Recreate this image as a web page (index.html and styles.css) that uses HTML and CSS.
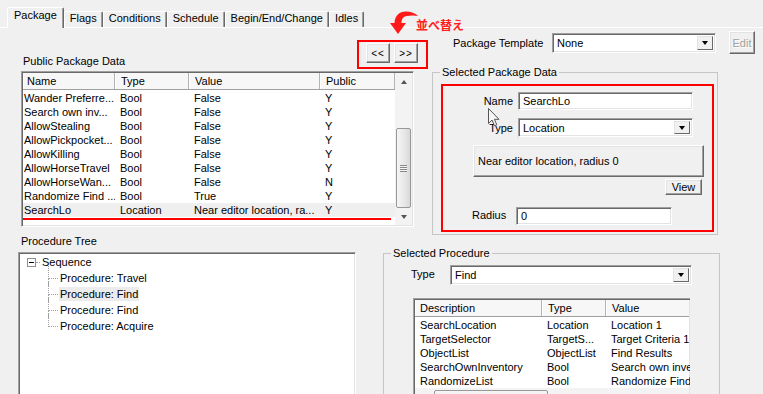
FILE: index.html
```html
<!DOCTYPE html>
<html lang="ja">
<head>
  <meta charset="UTF-8" />
  <title>Package</title>
  <link rel="stylesheet" href="styles.css">
</head>
<body>
  <div class="tabs">
    <div class="tab active">Package</div>
    <div class="tab">Flags</div>
    <div class="tab">Conditions</div>
    <div class="tab">Schedule</div>
    <div class="tab">Begin/End/Change</div>
    <div class="tab">Idles</div>
  </div>

  <div class="upper">
    <div class="pkg-col">
      <div class="pkg-head">
        <span class="caption">Public Package Data</span>
        <div class="red-box move-box">
          <button class="btn move-btn">&lt;&lt;</button>
          <button class="btn move-btn">&gt;&gt;</button>
        </div>
      </div>

      <div class="listview pkg-list">
        <div class="list-body">
          <div class="lv-head">
            <span>Name</span><span>Type</span><span>Value</span><span>Public</span>
          </div>
          <div class="lv-row"><span>Wander Preferre...</span><span>Bool</span><span>False</span><span>Y</span></div>
          <div class="lv-row"><span>Search own inv...</span><span>Bool</span><span>False</span><span>Y</span></div>
          <div class="lv-row"><span>AllowStealing</span><span>Bool</span><span>False</span><span>Y</span></div>
          <div class="lv-row"><span>AllowPickpocket...</span><span>Bool</span><span>False</span><span>Y</span></div>
          <div class="lv-row"><span>AllowKilling</span><span>Bool</span><span>False</span><span>Y</span></div>
          <div class="lv-row"><span>AllowHorseTravel</span><span>Bool</span><span>False</span><span>Y</span></div>
          <div class="lv-row"><span>AllowHorseWan...</span><span>Bool</span><span>False</span><span>N</span></div>
          <div class="lv-row"><span>Randomize Find ...</span><span>Bool</span><span>True</span><span>Y</span></div>
          <div class="lv-row selected"><span>SearchLo</span><span>Location</span><span>Near editor location, ra...</span><span>Y</span></div>
          <div class="red-line"></div>
        </div>
        <div class="vscroll">
          <span class="arrow up"></span>
          <span class="thumb"><i></i></span>
          <span class="arrow down"></span>
        </div>
      </div>
    </div>

    <div class="data-col">
      <div class="template-row">
        <label class="template-label">Package Template</label>
        <div class="combo template-combo"><span>None</span><b class="drop"></b></div>
        <button class="btn edit-btn" disabled>Edit</button>
      </div>

      <fieldset class="group pkg-data">
        <legend>Selected Package Data</legend>
        <div class="red-box data-box">
          <div class="field-row name-row">
            <label>Name</label>
            <div class="edit-box name-box">SearchLo</div>
          </div>
          <div class="field-row type-row">
            <label>Type</label>
            <div class="combo type-combo"><span>Location</span><b class="drop"></b></div>
          </div>
          <button class="btn big-btn">Near editor location, radius 0</button>
          <button class="btn view-btn">View</button>
          <div class="field-row radius-row">
            <label>Radius</label>
            <div class="edit-box radius-box">0</div>
          </div>
        </div>
      </fieldset>
    </div>
  </div>

  <div class="lower">
    <div class="tree-col">
      <div class="tree-cap">Procedure Tree</div>
      <div class="tree">
        <div class="tree-root"><span class="expander"></span><span class="node-text">Sequence</span></div>
        <ul class="tree-children">
          <li><span class="node-text">Procedure: Travel</span></li>
          <li><span class="node-text hot">Procedure: Find</span></li>
          <li><span class="node-text">Procedure: Find</span></li>
          <li><span class="node-text">Procedure: Acquire</span></li>
        </ul>
      </div>
    </div>

    <fieldset class="group proc-group">
      <legend>Selected Procedure</legend>
      <div class="field-row proc-type">
        <label>Type</label>
        <div class="combo proc-combo"><span>Find</span><b class="drop"></b></div>
      </div>
      <div class="listview proc-list">
        <div class="lv-head">
          <span>Description</span><span>Type</span><span>Value</span>
        </div>
        <div class="lv-row"><span>SearchLocation</span><span>Location</span><span>Location 1</span></div>
        <div class="lv-row"><span>TargetSelector</span><span>TargetS...</span><span>Target Criteria 1</span></div>
        <div class="lv-row"><span>ObjectList</span><span>ObjectList</span><span>Find Results</span></div>
        <div class="lv-row"><span>SearchOwnInventory</span><span>Bool</span><span>Search own inve</span></div>
        <div class="lv-row"><span>RandomizeList</span><span>Bool</span><span>Randomize Find</span></div>
        <div class="hscroll">
          <span class="arrow left"></span>
          <span class="hthumb"></span>
        </div>
      </div>
    </fieldset>
  </div>

  <!-- annotations drawn over the dialog -->
  <svg class="sort-arrow" width="32" height="28" viewBox="0 0 32 28">
    <path d="M6.5 15.5 C6.5 8 11 3.5 18 3.5 C23 3.5 27 5 30 8 C26 7 22 7.5 19 8 C15 8.5 13.5 11 13.5 15.5 Z" fill="#ff1a1a"/>
    <path d="M2 15 L18 15 L10 26 Z" fill="#ff1a1a"/>
  </svg>
  <span class="sort-note">並べ替え</span>
  <svg class="cursor" width="13" height="20" viewBox="0 0 13 20">
    <path d="M0.5 0.5 L0.5 15.5 L4 12 L6.5 17.8 L8.8 16.8 L6.4 11.3 L11 11.3 Z" fill="#f6f6f6" stroke="#555" stroke-width="1"/>
  </svg>
</body>
</html>
```

FILE: styles.css
```css
* {
  box-sizing: border-box;
}

body {
  margin: 0;
  width: 763px;
  height: 394px;
  overflow: hidden;
  position: relative;
  background: #f0f0f0;
  font-family: "Liberation Sans", Arial, sans-serif;
  font-size: 11px;
  color: #000;
}

button {
  font: inherit;
  color: inherit;
}

/* tab strip */
.tabs {
  display: flex;
  align-items: flex-end;
  height: 28px;
  padding-left: 7px;
  border-bottom: 1px solid #fff;
}

.tab {
  height: 16px;
  line-height: 12px;
  padding: 0 5px;
  border: 1px solid #fff;
  border-bottom: none;
  border-right-color: #696969;
  box-shadow: inset -1px 0 #a0a0a0;
  border-radius: 2px 2px 0 0;
  white-space: nowrap;
}

.tab.active {
  position: relative;
  height: 21px;
  line-height: 14px;
  padding: 0 6px;
  margin-bottom: -1px;
  background: #f0f0f0;
}

/* common controls */
.btn {
  background: #f0f0f0;
  border: 1px solid;
  border-color: #fff #696969 #696969 #fff;
  box-shadow: inset -1px -1px #a0a0a0, inset 1px 1px #e3e3e3;
  padding: 0;
}

.edit-box,
.combo {
  background: #fff;
  border: 1px solid;
  border-color: #a0a0a0 #fff #fff #a0a0a0;
  box-shadow: inset 1px 1px #696969, inset -1px -1px #e3e3e3;
}

.edit-box {
  height: 18px;
  line-height: 16px;
  padding: 0 4px;
}

.combo {
  display: flex;
  align-items: center;
  height: 20px;
  padding: 2px;
}

.combo span {
  flex: 1;
  padding-left: 2px;
}

.drop {
  width: 16px;
  height: 100%;
  display: flex;
  align-items: center;
  justify-content: center;
  background: #f0f0f0;
  border: 1px solid;
  border-color: #e3e3e3 #696969 #696969 #e3e3e3;
}

.drop::after {
  content: "";
  border-left: 3.5px solid transparent;
  border-right: 3.5px solid transparent;
  border-top: 4px solid #000;
}

.red-box {
  border: 2px solid #ff0000;
}

.group {
  margin: 0;
  min-width: 0;
  border: 1px solid #c6c6c6;
}

.group legend {
  padding: 0 2px;
  line-height: 14px;
}

.field-row {
  display: flex;
  align-items: center;
}

/* upper half */
.upper {
  display: flex;
}

.pkg-col {
  width: 407px;
  margin-left: 21px;
}

.pkg-head {
  height: 43px;
  display: flex;
  justify-content: space-between;
  align-items: flex-end;
}

.caption {
  line-height: 14px;
  padding-left: 2px;
  margin-bottom: 3px;
}

.move-box {
  align-self: flex-start;
  margin-top: 12px;
  display: flex;
  gap: 4px;
  padding: 1px 8px 4px 7px;
}

.move-btn {
  width: 24px;
  height: 20px;
  font-size: 10px;
  letter-spacing: 1px;
}

/* list views */
.listview {
  background: #fff;
  border: 1px solid;
  border-color: #a0a0a0 #fff #fff #a0a0a0;
  box-shadow: inset 1px 1px #696969, inset -1px -1px #e3e3e3;
  padding: 1px;
}

.lv-head,
.lv-row {
  display: grid;
  white-space: nowrap;
}

.lv-head {
  height: 17px;
  margin-bottom: 1px;
  background: #f7f7f7;
  border-bottom: 1px solid #a0a0a0;
}

.lv-head span {
  line-height: 16px;
  padding-left: 6px;
  border-right: 1px solid #b4b4b4;
  box-shadow: inset 1px 0 #fff;
  overflow: hidden;
}

.lv-row span {
  line-height: 14px;
  padding-left: 5px;
  overflow: hidden;
}

.pkg-list {
  display: flex;
  width: 393px;
  height: 156px;
}

.pkg-list .list-body {
  width: 372px;
}

.pkg-list .lv-head,
.pkg-list .lv-row {
  grid-template-columns: 92px 74px 131px 75px;
}

.pkg-list .lv-head span:first-child {
  padding-left: 4px;
}

.pkg-list .lv-row span:first-child {
  padding-left: 1px;
}

.lv-row.selected {
  background: #efefef;
}

.red-line {
  width: 368px;
  height: 2px;
  margin-top: 1px;
  background: #ff0000;
}

.vscroll {
  width: 17px;
  display: flex;
  flex-direction: column;
  background: #f3f3f3;
}

.arrow {
  width: 17px;
  height: 17px;
  flex: none;
  display: flex;
  align-items: center;
  justify-content: center;
}

.arrow.up::after {
  content: "";
  border-left: 3.5px solid transparent;
  border-right: 3.5px solid transparent;
  border-bottom: 4px solid #555;
}

.arrow.down::after {
  content: "";
  border-left: 3.5px solid transparent;
  border-right: 3.5px solid transparent;
  border-top: 4px solid #555;
}

.arrow.left::after {
  content: "";
  border-top: 3.5px solid transparent;
  border-bottom: 3.5px solid transparent;
  border-right: 4px solid #555;
}

.thumb {
  margin: auto 1px 0;
  height: 80px;
  display: flex;
  align-items: center;
  justify-content: center;
  border: 1px solid #989898;
  border-radius: 2px;
  background: linear-gradient(to right, #f6f6f6, #e6e6e6 60%, #d8d8d8);
}

.thumb i {
  width: 7px;
  height: 7px;
  background: repeating-linear-gradient(to bottom, #888 0 1px, #f4f4f4 1px 2px);
}

/* right column, upper */
.data-col {
  width: 331px;
  margin-left: 4px;
}

.template-row {
  display: flex;
  align-items: center;
  height: 23px;
  margin-top: 3px;
  padding-left: 21px;
}

.template-label {
  width: 99px;
}

.template-combo {
  width: 164px;
}

.edit-btn {
  width: 26px;
  height: 23px;
  margin-left: 13px;
  color: #a0a0a0;
  text-shadow: 1px 1px #fff;
}

.pkg-data {
  width: 286px;
  margin-top: 11px;
  padding: 5px 3px 2px 7px;
}

.data-box {
  width: 273px;
  height: 148px;
  margin-left: 1px;
  display: flex;
  flex-direction: column;
}

.name-row,
.type-row {
  gap: 5px;
}

.name-row label,
.type-row label {
  width: 70px;
  text-align: right;
}

.name-row {
  margin-top: 6px;
}

.name-box {
  width: 175px;
}

.type-row {
  margin-top: 8px;
}

.type-combo {
  width: 175px;
  height: 19px;
}

.big-btn {
  height: 32px;
  margin: 8px 8px 0 30px;
  padding-left: 4px;
  text-align: left;
}

.view-btn {
  align-self: flex-end;
  width: 37px;
  height: 16px;
  margin: 2px 10px 0 0;
  line-height: 12px;
}

.radius-row {
  margin: 12px 0 0 29px;
}

.radius-row label {
  width: 44px;
  margin-top: -2px;
}

.radius-box {
  width: 156px;
}

/* lower half */
.lower {
  display: flex;
  align-items: flex-start;
}

.tree-col {
  width: 338px;
  margin-left: 18px;
}

.tree-cap {
  line-height: 12px;
  padding-left: 3px;
}

.tree {
  height: 142px;
  margin-top: 5px;
  background: #fff;
  border: 1px solid;
  border-bottom: none;
  border-color: #a0a0a0 #fff #fff #a0a0a0;
  box-shadow: inset 1px 1px #696969, inset -1px 0 #e3e3e3;
  padding: 1px;
}

.tree-root {
  display: flex;
  align-items: center;
  height: 16px;
  padding-left: 7px;
}

.expander {
  position: relative;
  width: 9px;
  height: 9px;
  border: 1px solid #919191;
  background: #fff;
}

.expander::before {
  content: "";
  position: absolute;
  left: 1px;
  top: 3px;
  width: 5px;
  height: 1px;
  background: #000;
}

.expander::after {
  content: "";
  position: absolute;
  left: 8px;
  top: 3px;
  width: 4px;
  border-top: 1px dotted #a0a0a0;
}

.tree-root .node-text {
  margin-left: 6px;
}

.tree-children {
  list-style: none;
  margin: 0;
  padding-left: 28px;
}

.tree-children li {
  position: relative;
  height: 16px;
  line-height: 16px;
  padding-left: 12px;
}

.tree-children li::before {
  content: "";
  position: absolute;
  left: 0;
  top: -4px;
  width: 9px;
  height: 12px;
  border-left: 1px dotted #a0a0a0;
  border-bottom: 1px dotted #a0a0a0;
}

.tree-children li::after {
  content: "";
  position: absolute;
  left: 0;
  top: 8px;
  bottom: 0;
  border-left: 1px dotted #a0a0a0;
}

.tree-children li:last-child::after {
  display: none;
}

.node-text.hot {
  display: inline-block;
  line-height: 14px;
  margin-left: -1px;
  padding: 0 1px;
  background: #ececec;
}

.proc-group {
  width: 337px;
  height: 148px;
  margin-top: 11px;
  margin-left: 27px;
  padding: 0 0 0 7px;
  border-bottom: none;
  overflow: hidden;
}

.proc-type {
  margin: 5px 0 0 20px;
}

.proc-type label {
  width: 39px;
  margin-top: -2px;
}

.proc-combo {
  width: 242px;
}

.proc-list {
  width: 277px;
  height: 96px;
  margin: 13px 0 0 22px;
  border-right: none;
  border-bottom: none;
  overflow: hidden;
}

.proc-list .lv-head,
.proc-list .lv-row {
  grid-template-columns: 127px 64px 100px;
}

.proc-list .lv-head span:first-child {
  padding-left: 5px;
}

.hscroll {
  display: flex;
  height: 17px;
  background: #f3f3f3;
}

.hthumb {
  width: 114px;
  margin: 2px 0 0 2px;
  border: 1px solid #989898;
  border-radius: 2px;
  background: linear-gradient(#f6f6f6, #e2e2e2);
}

/* annotations */
.sort-arrow {
  position: absolute;
  left: 388px;
  top: 8px;
}

.sort-note {
  position: absolute;
  left: 416px;
  top: 18px;
  line-height: 14px;
  font-family: "Noto Sans CJK JP", sans-serif;
  font-size: 12px;
  font-weight: bold;
  color: #ff2020;
}

.cursor {
  position: absolute;
  left: 488px;
  top: 108px;
}
```
